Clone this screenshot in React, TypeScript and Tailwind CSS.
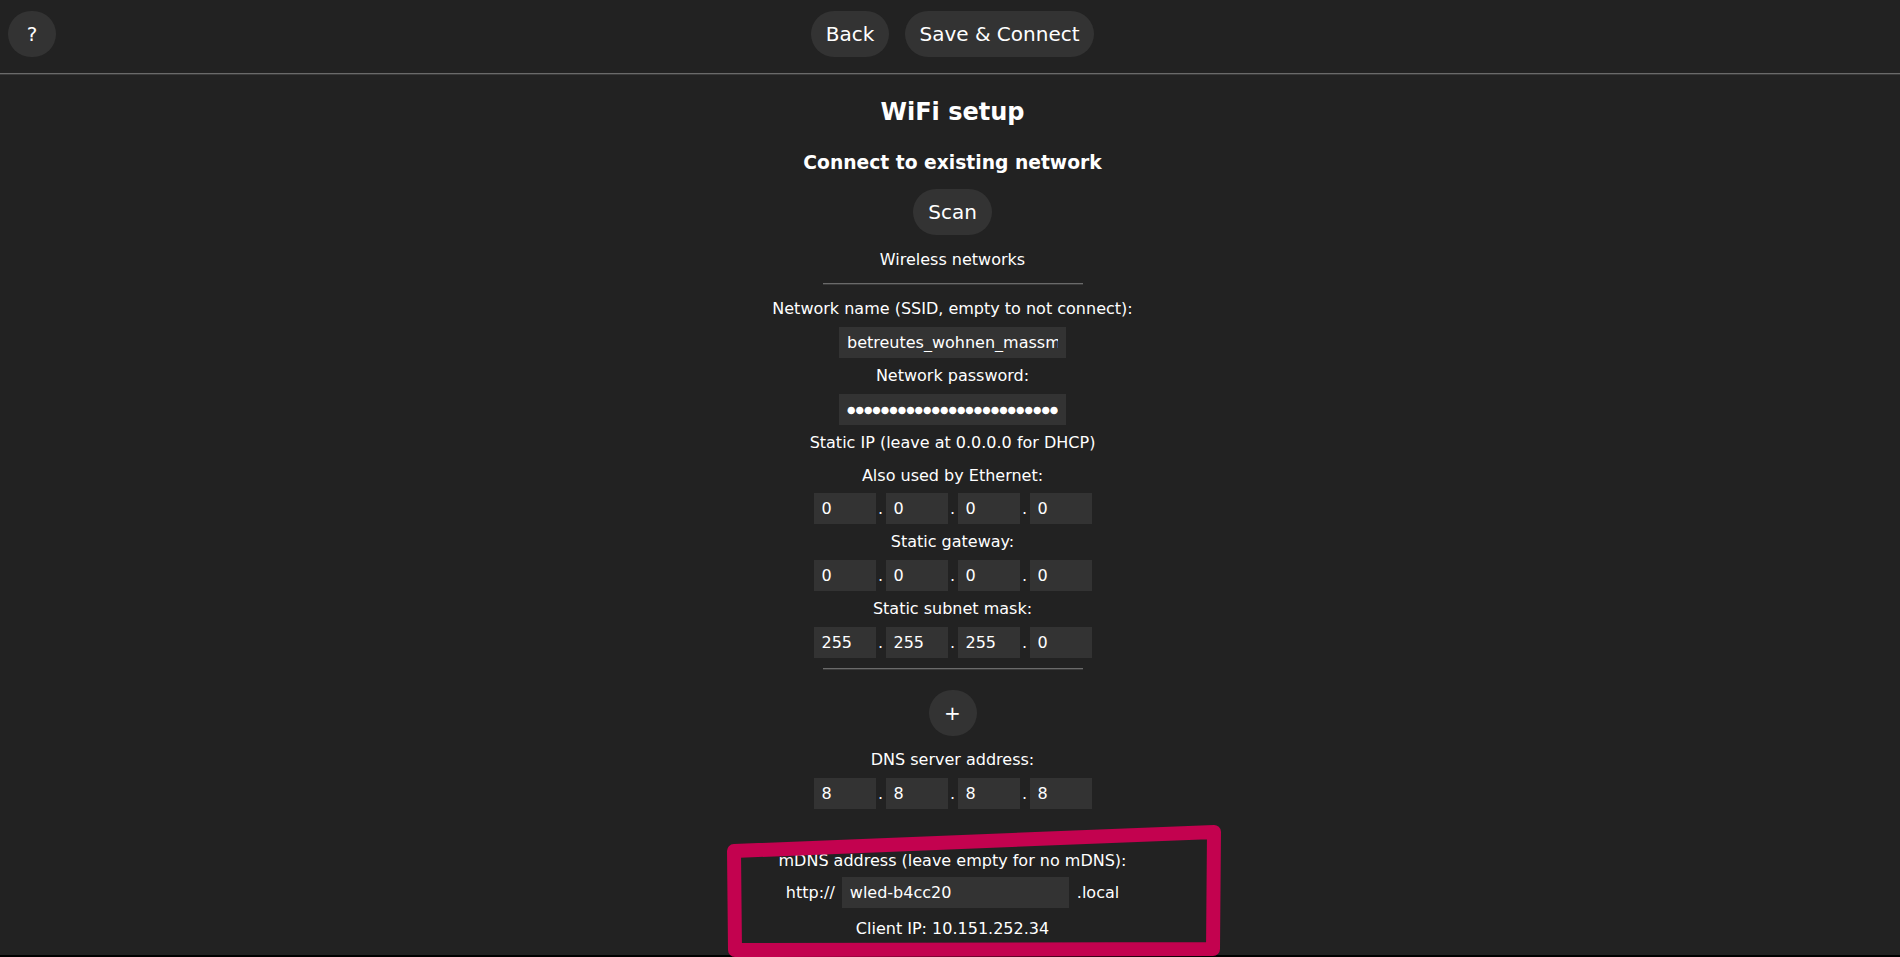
import { Fragment, type ReactNode } from "react";

function PillButton({ children, className = "" }: { children: ReactNode; className?: string }) {
  return (
    <button
      type="button"
      className={`flex h-[46px] items-center justify-center rounded-[24px] bg-[#333] text-[20px] text-white ${className}`}
    >
      {children}
    </button>
  );
}

function Label({ children, className = "" }: { children: ReactNode; className?: string }) {
  return <div className={`h-[32px] whitespace-nowrap text-[16px] leading-[32px] ${className}`}>{children}</div>;
}

function TextField({ value, className = "" }: { value: string; className?: string }) {
  return (
    <input
      type="text"
      readOnly
      value={value}
      className={`h-[31px] w-[227px] bg-[#333] px-2 text-[16px] text-white outline-none ${className}`}
    />
  );
}

function IpRow({ values, className = "" }: { values: string[]; className?: string }) {
  return (
    <div className={`flex h-[31px] ${className}`}>
      {values.map((v, i) => (
        <Fragment key={i}>
          {i > 0 && <span className="w-[10px] text-center text-[16px] leading-[31px]">.</span>}
          <input
            readOnly
            value={v}
            className="h-[31px] w-[62px] bg-[#333] px-2 text-[16px] text-white outline-none"
          />
        </Fragment>
      ))}
    </div>
  );
}

function Rule({ className = "" }: { className?: string }) {
  return (
    <div className={`w-[260px] ${className}`}>
      <div className="h-px bg-[#6a6a6a]" />
      <div className="h-px bg-[#3a3a3a]" />
    </div>
  );
}

export default function App() {
  return (
    <main className="relative flex h-[957px] w-full flex-col overflow-hidden bg-[#222] font-['DejaVu_Sans',Verdana,sans-serif] text-white">
      {/* Top row */}
      <div className="relative h-[73px] shrink-0">
        <div className="absolute left-[8px] top-[11px]">
          <PillButton className="w-[48px]">?</PillButton>
        </div>
        <div className="flex justify-center gap-4 pl-[5px] pt-[11px]">
          <PillButton className="w-[78px]">Back</PillButton>
          <PillButton className="w-[189px]">Save &amp; Connect</PillButton>
        </div>
      </div>
      <div className="h-px shrink-0 bg-[#6a6a6a]" />
      <div className="h-px shrink-0 bg-[#3a3a3a]" />

      {/* Form */}
      <section className="flex flex-col items-center pl-[5px]">
        <h2 className="mt-[21px] h-[32px] text-[24px] font-bold leading-[32px]">WiFi setup</h2>
        <h3 className="mt-[23px] h-[24px] text-[18.72px] font-bold leading-[24px]">Connect to existing network</h3>
        <PillButton className="mt-[14px] w-[79px]">Scan</PillButton>
        <Label className="mt-[9px]">Wireless networks</Label>
        <Rule className="mt-[7px]" />

        <Label className="mt-[8px] text-[16.3px]">Network name (SSID, empty to not connect):</Label>
        <TextField className="mt-[2px]" value="betreutes_wohnen_massmann" />
        <Label className="mt-[2px]">Network password:</Label>
        <input
          type="text"
          readOnly
          value={"●".repeat(30)}
          className="mt-[2px] h-[31px] w-[227px] bg-[#333] px-2 text-[9.7px] text-white outline-none"
        />
        <Label className="mt-[2px] text-[16.2px]">Static IP (leave at 0.0.0.0 for DHCP)</Label>
        <Label className="mt-px">Also used by Ethernet:</Label>
        <IpRow className="mt-px" values={["0", "0", "0", "0"]} />
        <Label className="mt-[2px]">Static gateway:</Label>
        <IpRow className="mt-[2px]" values={["0", "0", "0", "0"]} />
        <Label className="mt-[2px]">Static subnet mask:</Label>
        <IpRow className="mt-[2px]" values={["255", "255", "255", "0"]} />
        <Rule className="mt-[10px]" />

        <PillButton className="mt-[20px] w-[48px]">+</PillButton>
        <Label className="mt-[8px]">DNS server address:</Label>
        <IpRow className="mt-[2px]" values={["8", "8", "8", "8"]} />

        <Label className="mt-[36px] text-[16.2px]">mDNS address (leave empty for no mDNS):</Label>
        <div className="flex h-[31px] items-center gap-[7px] text-[16px]">
          <span>http://</span>
          <TextField value="wled-b4cc20" />
          <span className="ml-px">.local</span>
        </div>
        <Label className="mt-[5px] text-[16.3px]">Client IP: 10.151.252.34</Label>
      </section>

      <div className="mt-auto h-[2px] shrink-0 bg-black" />

      {/* Hand-drawn highlight */}
      <svg className="pointer-events-none absolute inset-0" width="1900" height="957" viewBox="0 0 1900 957">
        <path
          d="M734 851 L1214 832 L1213 949 L735 950 Z"
          fill="none"
          stroke="#c3024f"
          strokeWidth="14"
          strokeLinejoin="round"
        />
      </svg>
    </main>
  );
}
